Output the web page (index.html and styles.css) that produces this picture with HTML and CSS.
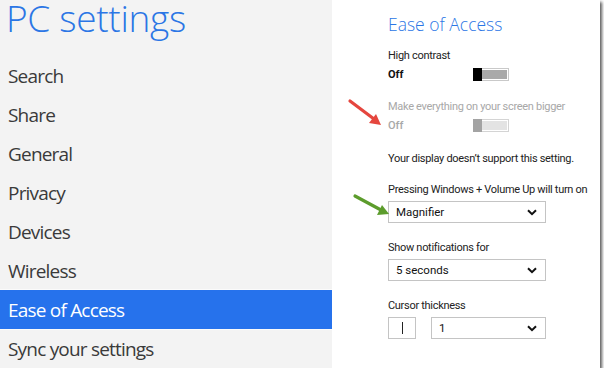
FILE: index.html
```html
<!DOCTYPE html>
<html>
<head>
<meta charset="utf-8">
<link rel="stylesheet" href="styles.css">
</head>
<body>
<div class="frame">
  <div class="nav">
    <h1 class="title">PC settings</h1>
    <ul class="menu">
      <li class="item">Search</li>
      <li class="item">Share</li>
      <li class="item">General</li>
      <li class="item">Privacy</li>
      <li class="item">Devices</li>
      <li class="item">Wireless</li>
      <li class="item selected">Ease of Access</li>
      <li class="item">Sync your settings</li>
    </ul>
  </div>
  <div class="main">
    <h2 class="heading">Ease of Access</h2>
    <div class="label l-hc">High contrast</div>
    <div class="toggle-row">
      <span class="state">Off</span>
      <span class="toggle"><span class="track"></span><span class="thumb"></span></span>
    </div>
    <div class="label disabled l-big">Make everything on your screen bigger</div>
    <div class="toggle-row off">
      <span class="state">Off</span>
      <span class="toggle"><span class="track"></span><span class="thumb"></span></span>
    </div>
    <div class="label l-note">Your display doesn’t support this setting.</div>
    <div class="label l-press">Pressing Windows + Volume Up will turn on</div>
    <div class="select"><span>Magnifier</span><svg class="chev" width="10" height="7" viewBox="0 0 10 7"><path d="M1 1.2 L5 5.2 L9 1.2" fill="none" stroke="#111" stroke-width="2"/></svg></div>
    <div class="label l-notif">Show notifications for</div>
    <div class="select"><span>5 seconds</span><svg class="chev" width="10" height="7" viewBox="0 0 10 7"><path d="M1 1.2 L5 5.2 L9 1.2" fill="none" stroke="#111" stroke-width="2"/></svg></div>
    <div class="label l-cursor">Cursor thickness</div>
    <div class="cursor-row">
      <div class="preview"><span class="caret"></span></div>
      <div class="select small"><span>1</span><svg class="chev" width="10" height="7" viewBox="0 0 10 7"><path d="M1 1.2 L5 5.2 L9 1.2" fill="none" stroke="#111" stroke-width="2"/></svg></div>
    </div>
  </div>
  <svg class="arrow red" width="40" height="34" viewBox="0 0 40 34">
    <line x1="3" y1="3" x2="27" y2="21" stroke="#e5463e" stroke-width="3.2" stroke-linecap="round"/>
    <polygon points="34,27 22,25 29,16" fill="#e5463e"/>
  </svg>
  <svg class="arrow green" width="42" height="28" viewBox="0 0 42 28">
    <line x1="3" y1="3" x2="29" y2="17" stroke="#5c9c2c" stroke-width="3.2" stroke-linecap="round"/>
    <polygon points="37,21 25,22 30,12" fill="#5c9c2c"/>
  </svg>
</div>
</body>
</html>
```
FILE: styles.css
```css
html, body {
  margin: 0;
  padding: 0;
  background: #ffffff;
}
.frame {
  position: relative;
  width: 600px;
  height: 368px;
  display: flex;
  box-shadow: 2px 2px 3px rgba(0,0,0,0.65);
  font-family: "Open Sans", "Noto Sans", sans-serif;
}
.nav {
  width: 332px;
  flex-shrink: 0;
  background: #f3f3f3;
  display: flex;
  flex-direction: column;
}
.title {
  margin: 0;
  height: 56px;
  padding-left: 6px;
  font-weight: 300;
  font-size: 37px;
  line-height: 36px;
  color: #2b76e5;
  letter-spacing: -0.3px;
  white-space: nowrap;
}
.menu {
  list-style: none;
  margin: 0;
  padding: 0;
}
.item {
  height: 39px;
  line-height: 41px;
  padding-left: 8px;
  font-size: 19px;
  color: #3a3a3a;
  letter-spacing: -0.8px;
  white-space: nowrap;
}
.item.selected {
  background: #2672ec;
  color: #ffffff;
  box-shadow: 0 -1px 0 #fbfbfb, 0 1px 0 #fbfbfb;
}
.main {
  flex: 1;
  min-width: 0;
  background: #ffffff;
  padding-left: 56px;
  padding-top: 10px;
  font-family: Roboto, "Open Sans", sans-serif;
  font-size: 11px;
  color: #222;
}
.heading {
  margin: 0;
  font-family: "Open Sans", sans-serif;
  font-weight: 300;
  font-size: 17.5px;
  line-height: 28px;
  color: #2b76e5;
  white-space: nowrap;
}
.label {
  line-height: 16px;
  color: #222;
  letter-spacing: -0.3px;
  white-space: nowrap;
}
.label.disabled { color: #a8a8a8; }
.l-hc { margin-top: 10px; }
.l-big { margin-top: 16px; }
.l-note { margin-top: 17px; }
.l-press { margin-top: 15px; }
.l-notif { margin-top: 17px; }
.l-cursor { margin-top: 17px; }
.toggle-row {
  display: flex;
  align-items: center;
  height: 18px;
  margin-top: 1px;
}
.state {
  width: 85px;
  font-weight: 700;
  color: #111;
}
.toggle {
  position: relative;
  width: 36px;
  height: 13px;
  box-sizing: border-box;
  border: 1px solid #c9c9c9;
  background: #ffffff;
}
.track {
  position: absolute;
  left: 1px; top: 1px; right: 1px; bottom: 1px;
  background: #a9a9a9;
}
.thumb {
  position: absolute;
  left: -1px; top: -1px; bottom: -1px;
  width: 9px;
  background: #000;
}
.toggle-row.off .state { color: #a8a8a8; font-weight: 500; }
.toggle-row.off .track { background: #e3e3e3; }
.toggle-row.off .toggle { border-color: #d4d4d4; }
.toggle-row.off .thumb { background: #a3a3a3; }
.select {
  width: 158px;
  height: 22px;
  box-sizing: border-box;
  border: 1px solid #c4c4c4;
  margin-top: 3px;
  display: flex;
  align-items: center;
  justify-content: space-between;
  padding: 0 8px 0 7px;
  font-size: 11.5px;
  color: #111;
}
.chev { display: block; }
.cursor-row {
  display: flex;
  gap: 15px;
  margin-top: 3px;
}
.cursor-row .select { margin-top: 0; width: 115px; }
.preview {
  width: 28px;
  height: 22px;
  box-sizing: border-box;
  border: 1px solid #c4c4c4;
  display: flex;
  align-items: center;
  justify-content: center;
}
.caret {
  width: 1px;
  height: 12px;
  background: #222;
}
.arrow { position: absolute; }
.arrow.red { left: 347px; top: 98px; }
.arrow.green { left: 352px; top: 193px; }
```
